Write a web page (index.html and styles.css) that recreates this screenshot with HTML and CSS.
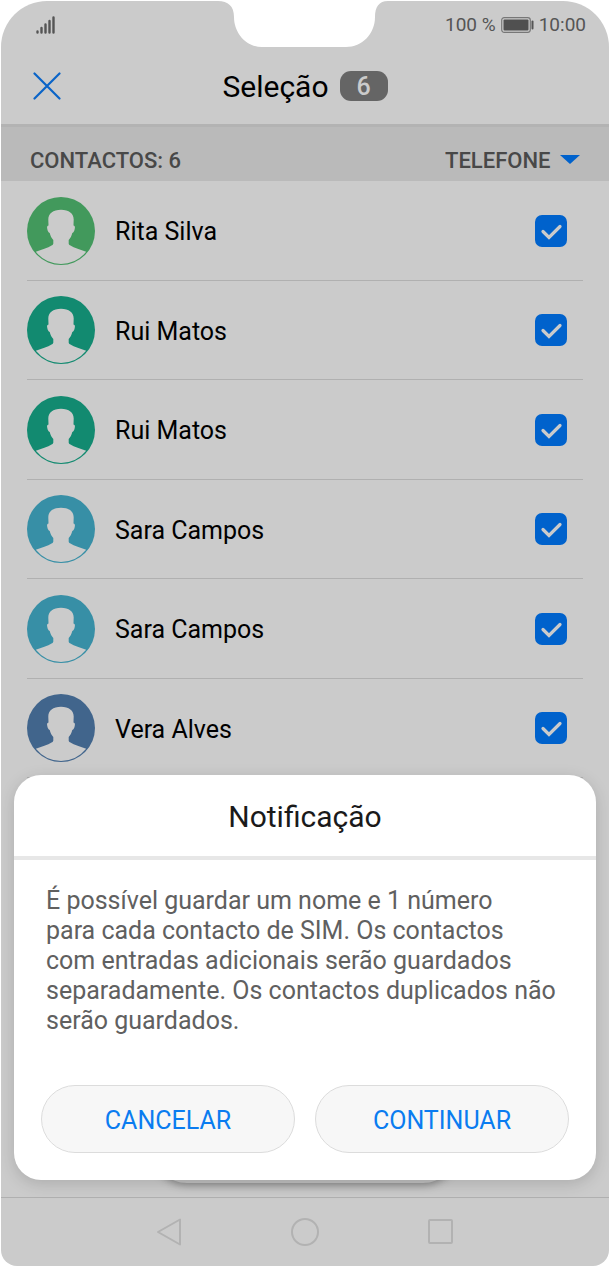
FILE: index.html
```html
<!DOCTYPE html>
<html lang="pt">
<head>
  <meta charset="UTF-8">
  <meta name="viewport" content="width=device-width, initial-scale=1">
  <title>Seleção</title>
  <link rel="stylesheet" href="styles.css">
</head>
<body>
  <svg class="symbols" aria-hidden="true">
    <symbol id="avatar" viewBox="0 0 68 68">
      <circle cx="34" cy="34" r="34" fill="currentColor"/>
      <path fill="#cbcbcb" d="M34 12.700C26 12.700 21.300 16.500 21.300 22.500C21.300 24.500 21.500 26.500 21.500 28.500C20 28.800 19.900 30 20.200 31.500C20.500 34 21.500 35.500 22.700 36C23.400 39 24.600 41 26.300 43L26.300 46.500C26.300 47.300 25.800 47.800 25 48.300C20.500 51 14.500 53 8.800 54.800A33 33 0 0 0 34 67A33 33 0 0 0 59.200 54.800C53.500 53 47.500 51 43 48.300C42.200 47.800 41.700 47.300 41.700 46.500L41.700 43C43.400 41 44.600 39 45.300 36C46.500 35.500 47.500 34 47.800 31.500C48.100 30 48 28.800 46.500 28.500C46.500 26.500 46.700 24.500 46.700 22.500C46.700 16.500 42 12.700 34 12.700z"/>
    </symbol>
    <symbol id="check" viewBox="0 0 32 32">
      <path d="M8 16.500l6 6L25 11.500" fill="none" stroke="#cbcbcb" stroke-width="3.200" stroke-linecap="round"/>
    </symbol>
  </svg>

  <div class="screen">
    <svg class="notch" viewBox="0 0 170 47" aria-hidden="true">
      <path fill="#fff" d="M0 0v1c10 0 16 5 16 16 0 16 12 30 28 30h84c16 0 29-13 29-30 0-10 4-16 13-16V0z"/>
    </svg>

    <div class="status-bar">
      <svg class="signal" viewBox="0 0 20 18" aria-label="Rede">
        <path d="M1.500 15.500v1M5.500 12v4.500M9.500 8.500v8M13.500 5v11.500M17.500 1.500v15" stroke="#555" stroke-width="2.400" stroke-linecap="round"/>
      </svg>
      <div class="status-info">
        <span>100 %</span>
        <svg class="battery" viewBox="0 0 33 16" aria-hidden="true">
          <rect x=".7" y=".7" width="28.600" height="14.600" rx="2.500" fill="none" stroke="#777" stroke-width="1.200"/>
          <rect x="2.500" y="2.500" width="25" height="11" rx="1" fill="#505050"/>
          <rect x="30.500" y="3.500" width="2" height="9" rx="1" fill="#555"/>
        </svg>
        <span>10:00</span>
      </div>
    </div>

    <header class="header">
      <button class="close" aria-label="Fechar">
        <svg viewBox="0 0 28 28"><path d="M1.500 1.500l25 25M26.500 1.500l-25 25" stroke="#0a64c8" stroke-width="2.200" stroke-linecap="round"/></svg>
      </button>
      <h1>Seleção</h1>
      <span class="count">6</span>
    </header>

    <main class="content">
      <div class="section">
        <h2>CONTACTOS: 6</h2>
        <label class="source">
          <select aria-label="Origem">
            <option>TELEFONE</option>
            <option>SIM</option>
          </select>
          <svg viewBox="0 0 20 9"><path d="M0 0h20l-10 9z" fill="#0062cc"/></svg>
        </label>
      </div>

      <ul class="contacts">
        <li>
          <svg class="avatar green"><use href="#avatar"/></svg>
          <label for="c1">Rita Silva</label>
          <span class="tick"><input type="checkbox" id="c1" checked><svg><use href="#check"/></svg></span>
        </li>
        <li>
          <svg class="avatar teal"><use href="#avatar"/></svg>
          <label for="c2">Rui Matos</label>
          <span class="tick"><input type="checkbox" id="c2" checked><svg><use href="#check"/></svg></span>
        </li>
        <li>
          <svg class="avatar teal"><use href="#avatar"/></svg>
          <label for="c3">Rui Matos</label>
          <span class="tick"><input type="checkbox" id="c3" checked><svg><use href="#check"/></svg></span>
        </li>
        <li>
          <svg class="avatar cyan"><use href="#avatar"/></svg>
          <label for="c4">Sara Campos</label>
          <span class="tick"><input type="checkbox" id="c4" checked><svg><use href="#check"/></svg></span>
        </li>
        <li>
          <svg class="avatar cyan"><use href="#avatar"/></svg>
          <label for="c5">Sara Campos</label>
          <span class="tick"><input type="checkbox" id="c5" checked><svg><use href="#check"/></svg></span>
        </li>
        <li>
          <svg class="avatar blue"><use href="#avatar"/></svg>
          <label for="c6">Vera Alves</label>
          <span class="tick"><input type="checkbox" id="c6" checked><svg><use href="#check"/></svg></span>
        </li>
      </ul>
      <div class="toolbar"></div>
    </main>

    <nav class="nav-bar">
      <button aria-label="Voltar"><svg viewBox="0 0 28 30"><path d="M3 15L25 2.500v25z"/></svg></button>
      <button aria-label="Início"><svg viewBox="0 0 28 30"><circle cx="14" cy="15" r="13"/></svg></button>
      <button aria-label="Recentes"><svg viewBox="0 0 28 30"><rect x="2" y="3" width="23" height="23" rx="1"/></svg></button>
    </nav>

    <div class="dialog" role="dialog" aria-labelledby="dialog-title">
      <h2 id="dialog-title">Notificação</h2>
      <p>É possível guardar um nome e 1 número<br>
        para cada contacto de SIM. Os contactos<br>
        com entradas adicionais serão guardados<br>
        separadamente. Os contactos duplicados não<br>
        serão guardados.</p>
      <div class="actions">
        <button>CANCELAR</button>
        <button>CONTINUAR</button>
      </div>
    </div>
  </div>
</body>
</html>
```
FILE: styles.css
```css
* {
  box-sizing: border-box;
}
body {
  margin: 0;
  padding: 1px 1px 0;
  min-height: 100vh;
  display: flex;
  background: #fff;
  font-family: Roboto, Arial, sans-serif;
  color: #000;
}
h1, h2, p, ul {
  margin: 0;
  padding: 0;
  font-weight: 400;
}
button {
  padding: 0;
  border: none;
  background: none;
  font-family: inherit;
  cursor: pointer;
}
svg {
  display: block;
}
.symbols {
  position: absolute;
  width: 0;
  height: 0;
}
.screen {
  position: relative;
  flex: 1;
  display: flex;
  flex-direction: column;
  background: #cbcbcb;
  border-radius: 46px 46px 16px 16px;
  overflow: hidden;
}

/* top of the phone */
.notch {
  position: absolute;
  top: -1px;
  left: calc(50% - 87px);
  width: 170px;
  height: 47px;
}
.status-bar {
  display: flex;
  justify-content: space-between;
  align-items: center;
  height: 47px;
  padding: 0 23px 0 35px;
  font-size: 19px;
  color: #555;
}
.signal {
  width: 20px;
  height: 18px;
}
.status-info {
  display: flex;
  align-items: center;
  gap: 5px;
}
.battery {
  width: 33px;
  height: 16px;
}
.header {
  position: relative;
  display: flex;
  justify-content: center;
  align-items: center;
  gap: 11px;
  height: 76px;
}
.close {
  position: absolute;
  left: 32px;
  width: 28px;
  height: 28px;
}
.header h1 {
  font-size: 30px;
}
.count {
  width: 48px;
  padding-top: 2px;
  border-radius: 11px;
  background: #656565;
  color: #cbcbcb;
  font-size: 25px;
  font-weight: 500;
  line-height: 28px;
  text-align: center;
}

/* contact list */
.content {
  position: relative;
  flex: 1;
}
.section {
  display: flex;
  justify-content: space-between;
  align-items: center;
  height: 57px;
  padding: 12px 29px 0 29px;
  border-top: 3px solid #b3b3b3;
  background: #bababa;
  color: #484848;
}
.section h2,
.source select {
  font-size: 22px;
  font-weight: 500;
}
.source {
  position: relative;
}
.source select {
  display: block;
  appearance: none;
  padding: 0 29px 0 0;
  border: none;
  background: none;
  font-family: inherit;
  color: inherit;
}
.source svg {
  position: absolute;
  top: 7px;
  right: 0;
  width: 20px;
  height: 9px;
  pointer-events: none;
}
.contacts {
  display: grid;
  grid-auto-rows: 1fr;
  min-height: 597px;
  margin: 0 26px;
  list-style: none;
}
.contacts li {
  display: flex;
  align-items: center;
  gap: 20px;
  padding: 1px 16px 0 0;
  border-bottom: 1px solid #b0b0b0;
}
.contacts label {
  flex: 1;
  padding-top: 2px;
  font-size: 25px;
}
.avatar {
  width: 68px;
  height: 68px;
}
.green { color: #42995c; }
.teal { color: #128a70; }
.cyan { color: #378fa6; }
.blue { color: #41658c; }
.tick {
  display: grid;
}
.tick input,
.tick svg {
  grid-area: 1 / 1;
  width: 32px;
  height: 32px;
}
.tick input {
  appearance: none;
  margin: 0;
  border: 2px solid #808080;
  border-radius: 7px;
}
.tick input:checked {
  border-color: #0062cc;
  background: #0062cc;
}
.tick svg {
  visibility: hidden;
  pointer-events: none;
}
.tick input:checked + svg {
  visibility: visible;
}
.toolbar {
  position: absolute;
  bottom: 14px;
  left: calc(50% - 152px);
  width: 304px;
  height: 68px;
  border-radius: 34px;
  background: #c0c0c0;
  box-shadow: 0 2px 8px rgba(0,0,0,0.35);
}

/* navigation keys */
.nav-bar {
  display: flex;
  justify-content: center;
  align-items: center;
  gap: 108px;
  height: 69px;
  border-top: 1px solid #b0b0b0;
}
.nav-bar svg {
  width: 28px;
  height: 30px;
  fill: none;
  stroke: #b2b2b2;
  stroke-width: 2;
  stroke-linejoin: round;
}

/* notification */
.dialog {
  position: absolute;
  right: 13px;
  bottom: 86px;
  left: 13px;
  border-radius: 27px;
  background: #fff;
  box-shadow: 0 4px 16px rgba(0,0,0,0.15);
}
.dialog h2 {
  padding: 3px 0 0;
  border-bottom: 4px solid #e7e7e7;
  font-size: 30px;
  line-height: 78px;
  text-align: center;
  color: #1a1a1a;
}
.dialog p {
  padding: 26px 24px 49px 32px;
  font-size: 25px;
  line-height: 30px;
  color: #606060;
}
.actions {
  display: flex;
  gap: 20px;
  padding: 0 27px 27px;
}
.actions button {
  flex: 1;
  height: 68px;
  padding-top: 2px;
  border: 1px solid #dcdcdc;
  border-radius: 34px;
  background: #f7f7f7;
  font-size: 25px;
  color: #0a7cf0;
}
```
